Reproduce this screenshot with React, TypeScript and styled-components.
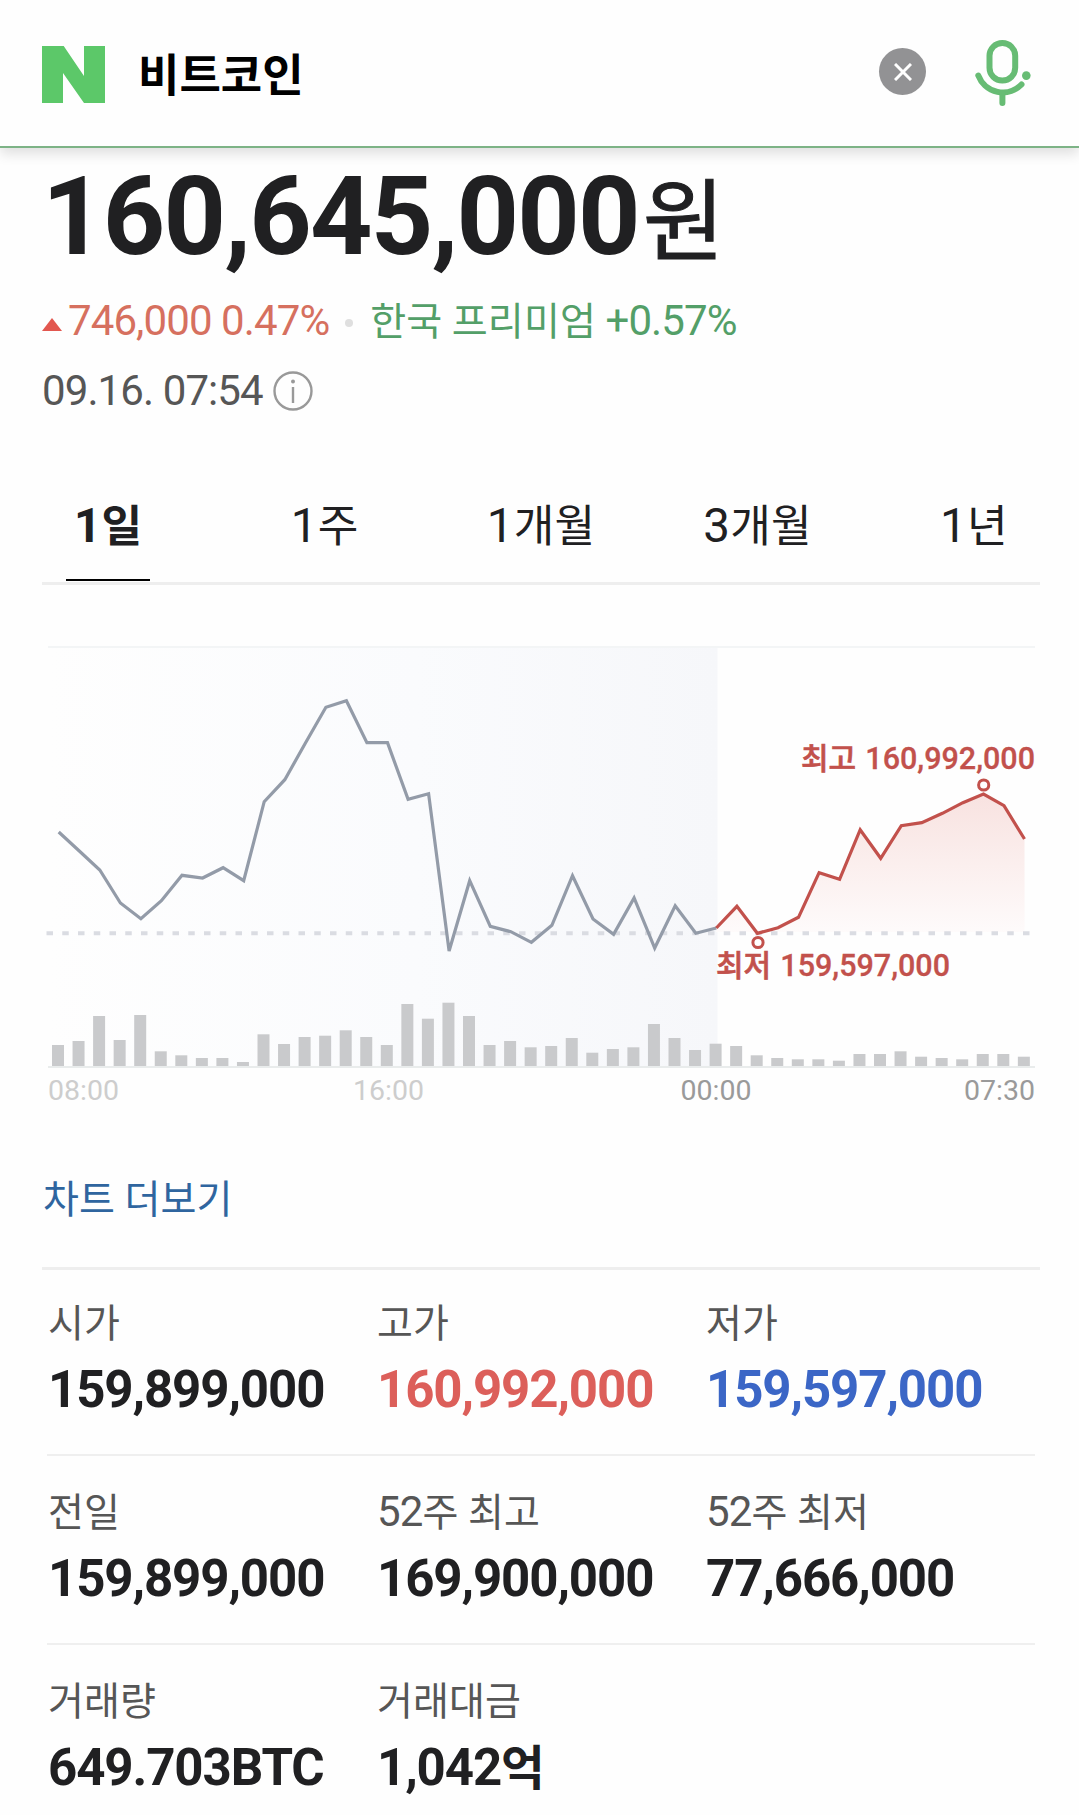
import React from 'react'
import styled, { createGlobalStyle } from 'styled-components'

const GlobalStyle = createGlobalStyle`
  body {
    margin: 0;
    background-color: #FEFEFE;
    font-family: 'Roboto', 'Noto Sans CJK KR', sans-serif;
    color: #202022;
    overflow: hidden;
  }
`;

const Page = styled.div`
  width: 1079px;
  height: 1815px;
  overflow: hidden;
`;

const SearchHeader = styled.header`
  display: flex;
  align-items: center;
  box-sizing: border-box;
  height: 148px;
  padding: 0 47px 0 42px;
  border-bottom: 2px solid #7DB386;
  background-color: #FEFEFE;
  box-shadow: 0 6px 12px rgba(0, 0, 0, 0.12);
`;

const Logo = styled.svg`
  width: 63px;
  height: 57px;
  margin-top: 3px;
`;

const Query = styled.div`
  flex: 1;
  margin: 7px 0 0 33px;
  font-size: 45px;
  font-weight: 700;
  line-height: 60px;
  color: #000;
`;

const ClearButton = styled.button`
  display: flex;
  align-items: center;
  justify-content: center;
  width: 47px;
  height: 47px;
  margin: 0 49px 3px 0;
  padding: 0;
  border: none;
  border-radius: 50%;
  background-color: #929294;
`;

const MicIcon = styled.svg`
  width: 57px;
  height: 68px;
`;

const Summary = styled.section`
  padding: 9px 42px 0;
`;

const Price = styled.div`
  display: flex;
  height: 120px;
  font-size: 109px;
  font-weight: 700;
  line-height: 120px;
  letter-spacing: -1.8px;
`;

const Unit = styled.span`
  margin: 6px 0 0 4px;
  font-size: 89px;
  font-weight: 400;
  -webkit-text-stroke: 1px #202022;
`;

const ChangeRow = styled.div`
  display: flex;
  align-items: center;
  margin-top: 19px;
  font-size: 42px;
  line-height: 50px;
  letter-spacing: -0.9px;
`;

const UpArrow = styled.div`
  border-left: 10.5px solid transparent;
  border-right: 10.5px solid transparent;
  border-bottom: 13px solid #E2574F;
  margin: 7px 6px 0 0;
`;

const Change = styled.span`
  color: #D6705F;
`;

const Dot = styled.span`
  width: 8px;
  height: 8px;
  margin: 4px 17px 0 16px;
  border-radius: 50%;
  background-color: #DFDFDF;
`;

const Premium = styled.span`
  color: #539F68;
`;

const Ko = styled.span`
  font-size: 0.93em;
  line-height: 0;
  letter-spacing: 0.1px;
`;

const DateRow = styled.div`
  display: flex;
  align-items: center;
  gap: 10px;
  margin-top: 20px;
  font-size: 42px;
  line-height: 50px;
  letter-spacing: -0.9px;
  color: #565656;
`;

const Tabs = styled.nav`
  display: flex;
  width: 1082px;
  margin-top: 80px;
`;

const TabCell = styled.div`
  flex: 1;
  display: flex;
  justify-content: center;
`;

const Tab = styled.div<{ $active?: boolean }>`
  min-width: 84px;
  padding-bottom: 23px;
  text-align: center;
  font-size: 47.5px;
  line-height: 60px;
  letter-spacing: 0.3px;
  font-weight: ${({ $active }) => ($active ? 700 : 400)};
  border-bottom: 2px solid ${({ $active }) => ($active ? '#000' : 'transparent')};
`;

const Divider = styled.div`
  height: 3px;
  margin: 0 39px 0 42px;
  background-color: #EEEEEE;
`;

const TabDivider = styled(Divider)`
  margin-top: 1px;
`;

const Chart = styled.svg`
  display: block;
  width: 1079px;
  height: 480px;
  margin-top: 45px;
`;

const MoreLink = styled.div`
  margin: 64px 42px 43px 43px;
  font-size: 42px;
  line-height: 50px;
  letter-spacing: -0.9px;
  color: #2F659F;
`;

const Stats = styled.section`
  padding: 0 44px 0 47px;
`;

const StatRow = styled.div`
  display: grid;
  grid-template-columns: 329px 329px 1fr;
  padding: 31px 0 34px;
  border-bottom: 2px solid #EFEFEF;

  &:first-child {
    padding-top: 28px;
  }

  &:last-child {
    border-bottom: none;
  }
`;

const StatLabel = styled.div`
  font-size: 42px;
  line-height: 50px;
  letter-spacing: -0.9px;
  color: #565656;
  padding-left: 1px;
`;

const StatValue = styled.div<{ $color?: string }>`
  margin-top: 12px;
  font-size: 51px;
  font-weight: 700;
  line-height: 60px;
  letter-spacing: -1.1px;
  padding-left: 1px;
  color: ${({ $color }) => $color || '#202022'};
`;

const tabs = ['1일', '1주', '1개월', '3개월', '1년'];

const stats = [
  [
    { label: '시가', value: '159,899,000' },
    { label: '고가', value: '160,992,000', color: '#DC5F5A' },
    { label: '저가', value: '159,597,000', color: '#3B66C6' },
  ],
  [
    { label: '전일', value: '159,899,000' },
    { label: '52주 최고', value: '169,900,000' },
    { label: '52주 최저', value: '77,666,000' },
  ],
  [
    { label: '거래량', value: '649.703BTC' },
    { label: '거래대금', value: '1,042억' },
  ],
];

// one point every 30 minutes, 08:00 to 07:30
const prices = [
  832, 851, 870, 903, 918.7, 900.7, 875.3, 878, 867.7, 880.7, 801.7, 779.7,
  743.3, 707.3, 700.7, 742.7, 742.7, 799.3, 793.7, 951, 880.7, 926.3, 931.7, 942.3,
  925.3, 875.7, 919, 934.3, 898, 948, 905.7, 933.3, 928, 906.3, 933.3, 927.7,
  917.3, 872.7, 879.3, 829.7, 858.3, 825.7, 822.7, 813.3, 802.7, 794, 805.7, 839,
];

const volumes = [
  21, 25, 50, 26, 51, 14.7, 10.7, 8, 8, 4, 31.7, 22,
  29, 30.3, 35.7, 29, 21, 62, 47.3, 63.3, 50, 21, 25, 18.7,
  20, 28, 13.3, 17, 18.7, 42, 28, 16, 22.3, 20, 10.7, 8,
  6.7, 6.7, 5.3, 12, 12, 14.7, 9.3, 8, 6.7, 12, 12, 9.3,
];

const STEP = 20.55;
const MIDNIGHT = 32;
const points = prices.map((y, i) => `${(58.7 + i * STEP).toFixed(1)},${y}`);
const yesterday = points.slice(0, MIDNIGHT + 1).join(' ');
const today = points.slice(MIDNIGHT).join(' ');

// splits Hangul from digits so that the two can be sized separately
const renderMixed = (text: string) =>
  text.split(/([가-힣]+)/).map((part, i) => (i % 2 ? <Ko key={i}>{part}</Ko> : part));

function PriceChart() {
  return (
    <Chart viewBox="0 630 1079 480">
      <defs>
        <linearGradient id="shade" x1="0" x2="1" y1="0" y2="0">
          <stop offset="0" stopColor="#FEFEFE" />
          <stop offset="0.55" stopColor="#FAFBFD" />
          <stop offset="1" stopColor="#F6F7FA" />
        </linearGradient>
        <linearGradient id="rise" x1="0" x2="0" y1="0" y2="1">
          <stop offset="0" stopColor="#F8E2E0" />
          <stop offset="1" stopColor="#FEFBFB" />
        </linearGradient>
      </defs>
      <rect x="48" y="648" width="669.5" height="418" fill="url(#shade)" />
      <rect x="48" y="646" width="987" height="2" fill="#F3F5F6" />
      <polygon points={`${today} 1024.6,932 716.3,932`} fill="url(#rise)" />
      <line x1="46.5" x2="1030" y1="933.3" y2="933.3" stroke="#DADCE2" strokeWidth="4" strokeDasharray="6.5 9.25" />
      {volumes.map((v, i) => (
        <rect key={i} x={52 + i * STEP} y={1066 - v} width="12" height={v} fill="#C9CACC" />
      ))}
      <rect x="48" y="1066" width="987" height="2" fill="#E9ECEC" />
      <polyline points={yesterday} fill="none" stroke="#939BA8" strokeWidth="3.2" />
      <polyline points={today} fill="none" stroke="#C2514C" strokeWidth="3.2" />
      <circle cx="983.7" cy="785" r="5.1" fill="#FFF" stroke="#C2514C" strokeWidth="3" />
      <circle cx="758" cy="942.5" r="5.1" fill="#FFF" stroke="#C2514C" strokeWidth="3" />
      <g fontSize="30.5" fontWeight="500" fill="#C2514C" stroke="#C2514C">
        <text x="801" y="768.7" fontSize="30" strokeWidth="0.6">최고</text>
        <text x="1035" y="768.7" textAnchor="end" strokeWidth="0.3">160,992,000</text>
        <text x="716" y="976.3" fontSize="30" strokeWidth="0.6">최저</text>
        <text x="950" y="976.3" textAnchor="end" strokeWidth="0.3">159,597,000</text>
      </g>
      <g fontSize="28.5" fill="#CDCDCD">
        <text x="48" y="1099.5">08:00</text>
        <text x="353" y="1099.5">16:00</text>
        <text x="680.5" y="1099.5" fill="#9A9A9A">00:00</text>
        <text x="1035" y="1099.5" fill="#9A9A9A" textAnchor="end">07:30</text>
      </g>
    </Chart>
  );
}

export default function App() {
  return (
    <Page>
      <GlobalStyle />
      <SearchHeader>
        <Logo viewBox="0 0 63 57">
          <path d="M0 0H21.7L42 30V0H63V57H42L21 27V57H0Z" fill="#5CC869" />
        </Logo>
        <Query>비트코인</Query>
        <ClearButton aria-label="clear">
          <svg width="18" height="18" viewBox="0 0 18 18">
            <path d="M1 1L17 17M17 1L1 17" stroke="#FFF" strokeWidth="3" />
          </svg>
        </ClearButton>
        <MicIcon viewBox="975 39 57 68" fill="none" stroke="#67BC74" strokeWidth="6" strokeLinecap="round">
          <rect x="989.5" y="43" width="25.7" height="37.6" rx="12.8" />
          <path d="M978.3 75.5A26.2 26.2 0 0 0 1021.5 84.5" />
          <path d="M1002.4 93V103" />
          <circle cx="1026.3" cy="75.6" r="4.3" fill="#67BC74" stroke="none" />
        </MicIcon>
      </SearchHeader>

      <Summary>
        <Price>
          160,645,000
          <Unit>원</Unit>
        </Price>
        <ChangeRow>
          <UpArrow />
          <Change>746,000 0.47%</Change>
          <Dot />
          <Premium>{renderMixed('한국 프리미엄 +0.57%')}</Premium>
        </ChangeRow>
        <DateRow>
          09.16. 07:54
          <svg width="40" height="40" viewBox="0 0 40 40">
            <circle cx="20" cy="20" r="18.5" fill="none" stroke="#999" strokeWidth="2.4" />
            <circle cx="20" cy="10.5" r="2" fill="#999" />
            <path d="M20 16V32" stroke="#999" strokeWidth="2.4" />
          </svg>
        </DateRow>
      </Summary>

      <Tabs>
        {tabs.map((tab, i) => (
          <TabCell key={tab}>
            <Tab $active={i === 0}>{renderMixed(tab)}</Tab>
          </TabCell>
        ))}
      </Tabs>
      <TabDivider />

      <PriceChart />
      <MoreLink>{renderMixed('차트 더보기')}</MoreLink>
      <Divider />

      <Stats>
        {stats.map((row, i) => (
          <StatRow key={i}>
            {row.map((stat) => (
              <div key={stat.label}>
                <StatLabel>{renderMixed(stat.label)}</StatLabel>
                <StatValue $color={stat.color}>{renderMixed(stat.value)}</StatValue>
              </div>
            ))}
          </StatRow>
        ))}
      </Stats>
    </Page>
  );
}
